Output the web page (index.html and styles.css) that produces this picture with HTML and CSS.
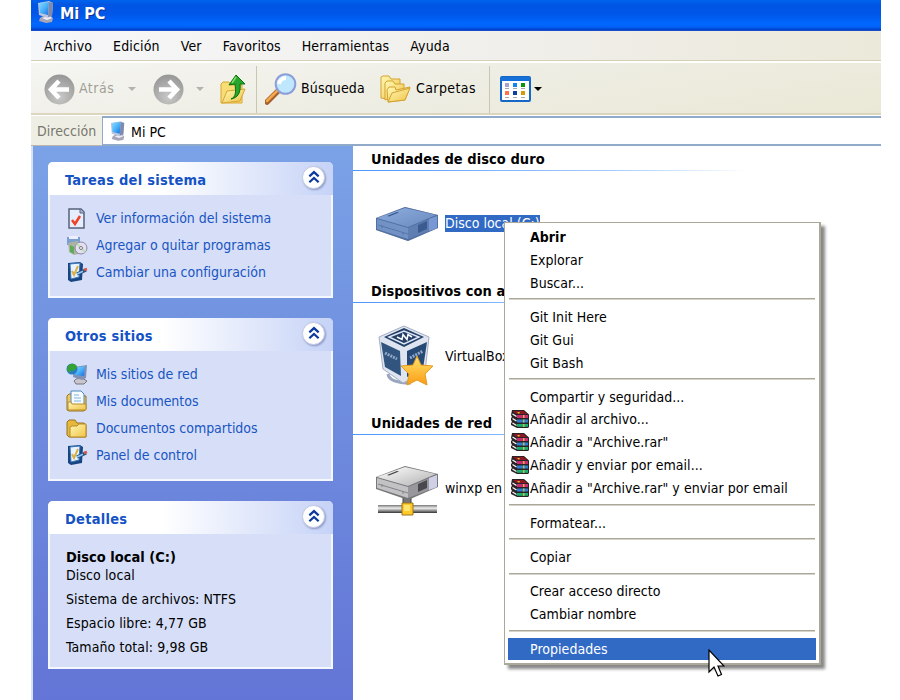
FILE: index.html
```html
<!DOCTYPE html>
<html lang="es">
<head>
<meta charset="utf-8">
<title>Mi PC</title>
<link rel="stylesheet" href="styles.css">
</head>
<body>
<svg class="defs" width="0" height="0">
  <defs>
    <linearGradient id="screen" x1="0" y1="0" x2="1" y2="1"><stop offset="0" stop-color="#8fd9ff"/><stop offset=".5" stop-color="#4bb4fa"/><stop offset="1" stop-color="#1a6fe0"/></linearGradient>
    <linearGradient id="fold" x1="0" y1="0" x2="1" y2="1"><stop offset="0" stop-color="#fff8b5"/><stop offset="1" stop-color="#efc347"/></linearGradient>
    <radialGradient id="grey" cx=".5" cy=".75" r=".7"><stop offset="0" stop-color="#c9c9c7"/><stop offset="1" stop-color="#999"/></radialGradient>
    <linearGradient id="metal" x1="0" y1="0" x2="1" y2="1"><stop offset="0" stop-color="#fff"/><stop offset="1" stop-color="#b0b0b2"/></linearGradient>
    <linearGradient id="pole" x1="0" y1="0" x2="0" y2="1"><stop offset="0" stop-color="#777"/><stop offset=".4" stop-color="#eee"/><stop offset="1" stop-color="#333"/></linearGradient>
    <linearGradient id="gold" x1="0" y1="0" x2="0" y2="1"><stop offset="0" stop-color="#ffe36b"/><stop offset="1" stop-color="#fb9c12"/></linearGradient>
    <symbol id="pc" viewBox="0 0 18 22">
      <path d="M6 15l6-1 4 3-1 4-6 1-7-2 1-3z" fill="#a7a5b8"/><path d="M5 17l7-2 3 2-5 2z" fill="#efeff6"/>
      <path d="M1 2l11-2 4 2-1 13-4 2-9-3z" fill="#bac5df"/><path d="M2 2l10-1-1 13-8-2z" fill="url(#screen)"/><path d="M12 1l4 1-1 13-4 1z" fill="#7f89ae"/>
    </symbol>
    <symbol id="control" viewBox="0 0 22 22">
      <path d="M2 2l12-1 3 2-1 16-11 2-3-2z" fill="#174581"/><path d="M4 3l10-1-1 14-8 2z" fill="#e9f3ff" stroke="#3d76bd"/><path d="M6 10l2 4 4-9" fill="none" stroke="#d9b044" stroke-width="2"/><path d="M11 13l9-4" stroke="#234f83" stroke-width="3.500"/><path d="M11 13l6-2.700" stroke="#92c8f2" stroke-width="1.600"/><path d="M18 9l3-1" stroke="#d75744" stroke-width="2.500"/>
    </symbol>
    <symbol id="up" viewBox="0 0 12 12"><path d="M2 5.500l4-3.700 4 3.700M2 10.500l4-3.700 4 3.700" fill="none" stroke="#0b3a9c" stroke-width="1.900"/></symbol>
    <symbol id="books" viewBox="0 0 18 18">
      <path d="M1 0h12l5 4.500V17l-1 1H6l-6-3v-2l1-1-1-2V8l1-1-1-2z" fill="#2b2226"/>
      <path d="M2 1h10.500l4 3H5.500z" fill="#8c1924"/><path d="M6 5h11v3H6z" fill="#c92a72"/><path d="M6 9.500h11v3H6z" fill="#2a7fd0"/><path d="M6 14h11v2.800H6z" fill="#18b070"/>
      <path d="M1.500 4l4 2.500M1.500 8.500l4 2.500M1.500 13l4 2.500" stroke="#f4f4f4" stroke-width="1.400"/><path d="M6 2h3l-1 2z" fill="#d9b82b"/><path d="M12 5h1.500v3H12zM12 9.500h1.500v3H12zM12 14h1.500v3H12z" fill="#c9b64a"/>
    </symbol>
    <symbol id="drive" viewBox="0 0 64 36">
      <path d="M1 12L30 1l33 8v13L33 35 1 24z" fill="#77777a"/><path d="M2 12L30 2l31 7-28 12z" fill="url(#metal)"/><path d="M2 13l31 9v11L2 23z" fill="#c2c2c5"/><path d="M33 22l29-12v12L33 33z" fill="#97979c"/><path d="M54 13l8-3v12l-8 3z" fill="#cfcfe6"/><path d="M43 19l9-4v8l-9 4z" fill="#48484e"/><path d="M3 19l30 9M7 22v-3M28 29v-3" stroke="#848488"/><path d="M12 10l10-4 2 .6-10 4z" fill="#444"/>
    </symbol>
  </defs>
</svg>

<div class="window">
  <header class="titlebar"><svg width="18" height="22"><use href="#pc"/></svg><span>Mi PC</span></header>
  <nav class="menubar"><span>Archivo</span><span>Edición</span><span>Ver</span><span>Favoritos</span><span>Herramientas</span><span>Ayuda</span></nav>
  <div class="toolbar">
    <svg class="round" width="31" height="31" viewBox="0 0 31 31"><circle cx="15.500" cy="15.500" r="15" fill="url(#grey)"/><path d="M15 7l-8 8.500 8 8.500M8 15.500h17" fill="none" stroke="#fff" stroke-width="4.500"/></svg>
    <span class="label back">Atrás</span><i class="caret dim"></i>
    <svg class="round forward" width="31" height="31" viewBox="0 0 31 31"><circle cx="15.500" cy="15.500" r="15" fill="url(#grey)"/><path d="M16 7l8 8.500-8 8.500M23 15.500H6" fill="none" stroke="#fff" stroke-width="4.500"/></svg>
    <i class="caret dim second"></i>
    <svg class="upfolder" width="26" height="31" viewBox="0 0 26 31"><path d="M1 29V10l2-2h6l2 3h11v18z" fill="#f8dc76" stroke="#d8a631"/><path d="M2 29l5-12 18-2-5 12z" fill="url(#fold)" stroke="#d8a631"/><path d="M11 25c5-2 5-7 4-15l-6 1 7-10 9 9-5 0c1 8-2 14-9 15z" fill="#27a52c" stroke="#08700d"/><path d="M16 3l-4 6" stroke="#89de69" stroke-width="1.500"/></svg>
    <i class="split"></i>
    <svg class="search" width="32" height="32" viewBox="0 0 32 32"><path d="M2 29L14 17" stroke="#a6612b" stroke-width="5.500" stroke-linecap="round"/><path d="M2 28L13 17" stroke="#f5a84f" stroke-width="2.500" stroke-linecap="round"/><circle cx="20.500" cy="11" r="9.800" fill="#bfe8ff" stroke="#8c9fd8" stroke-width="2"/><path d="M14 11a7 7 0 0 1 7-6" stroke="#fff" stroke-width="4" fill="none"/></svg>
    <span class="label find">Búsqueda</span>
    <svg class="folders" width="31" height="28" viewBox="0 0 31 28"><g fill="url(#fold)" stroke="#d3a32e"><path d="M1 23V2l2-1h6l2 3h9v8L8 24z"/><path d="M5 25V8l2-2h6l2 3h9v8z"/><path d="M8 27L7 15l2-3h6l1 3 14-3-5 13z"/><path d="M8 27l4-9 18-5-5 12z"/></g></svg>
    <span class="label">Carpetas</span>
    <i class="split last"></i>
    <svg class="views" width="31" height="26" viewBox="0 0 31 26"><rect x="1" y="1" width="29" height="24" rx="1" fill="#fff" stroke="#1767c7" stroke-width="2"/><path d="M1 1h29v4H1z" fill="#1672d9"/><path d="M5 7h4v4H5z" fill="#a9a2d2"/><path d="M13 7h4v4h-4z" fill="#1585ed"/><path d="M21 7h4v4h-4z" fill="#0b960d"/><path d="M5 15h4v4H5z" fill="#ff7448"/><path d="M13 15h4v4h-4z" fill="#103e9c"/><path d="M21 15h4v4h-4z" fill="#d39b09"/><path d="M5 12.500h4m4 0h4m4 0h4M5 21.500h4m4 0h4m4 0h4" stroke="#aaa"/></svg>
    <i class="caret"></i>
  </div>
  <div class="address"><span class="address-label">Dirección</span><div class="address-field"><svg width="16" height="20"><use href="#pc"/></svg><span>Mi PC</span></div></div>
  <div class="body">
    <aside class="side">
      <section class="panel tasks">
        <h2>Tareas del sistema<b class="collapse"><svg width="14" height="14"><use href="#up"/></svg></b></h2>
        <ul>
          <li><svg width="22" height="22" viewBox="0 0 22 22"><path d="M3 2h12l3 3v16H3z" fill="#e6eefd" stroke="#56627e" stroke-width="1.500"/><path d="M14 2v4h4" fill="#aebbd8" stroke="#56627e"/><path d="M6 13l3 4 5-8" fill="none" stroke="#f14024" stroke-width="2.500"/></svg>Ver información del sistema</li>
          <li><svg width="22" height="22" viewBox="0 0 22 22"><path d="M1 3h13v8H1z" fill="#79a0d0"/><path d="M3 2h9v3H3z" fill="#eef"/><path d="M2 9l9-2 6 3v9l-9 2-5-3z" fill="#aeb2a3"/><path d="M4 11l4 2v7l-4-2z" fill="#5eac55"/><circle cx="15" cy="14" r="6" fill="#e4def4" stroke="#8b88a5"/><path d="M15 14l-4-4M15 14l4 4" stroke="#b8e1b2" stroke-width="2"/><circle cx="15" cy="14" r="1.500" fill="#fff" stroke="#777"/></svg>Agregar o quitar programas</li>
          <li><svg width="22" height="22"><use href="#control"/></svg>Cambiar una configuración</li>
        </ul>
      </section>
      <section class="panel places">
        <h2>Otros sitios<b class="collapse"><svg width="14" height="14"><use href="#up"/></svg></b></h2>
        <ul>
          <li><svg width="22" height="22" viewBox="0 0 22 22"><path d="M10 16l6-1 5 3-3 3h-8l-2-3z" fill="#c9c6cf" stroke="#777"/><path d="M8 4l13-2-1 13-4 2-9-3z" fill="#8091b5"/><path d="M8 5l11-2-1 10-9-1z" fill="url(#screen)"/><circle cx="6" cy="6" r="5.500" fill="#277cc5"/><path d="M2 3c4-4 8-2 9 1L8 8 5 7 4 10 1 7z" fill="#35a333"/></svg>Mis sitios de red</li>
          <li><svg width="22" height="22" viewBox="0 0 22 22"><path d="M1 20V6l2-2h3l2 2h12v13l-2 2H3z" fill="#f2ca5c" stroke="#94722c"/><path d="M5 1h10l3 3v11H5z" fill="#f5fbff" stroke="#4d89bd"/><path d="M8 5h5M8 8h7M8 11h7" stroke="#7fb3dd"/><path d="M2 12h3l1 2h14v6H2z" fill="url(#fold)" stroke="#b78b31"/></svg>Mis documentos</li>
          <li><svg width="22" height="22" viewBox="0 0 22 22"><path d="M1 18V5l2-2h6l2 3h7l2 2v12H3z" fill="#e6b83c" stroke="#987125"/><path d="M4 20V10l2-1h5l2-2h7v13z" fill="url(#fold)" stroke="#b98b2a"/></svg>Documentos compartidos</li>
          <li><svg width="22" height="22"><use href="#control"/></svg>Panel de control</li>
        </ul>
      </section>
      <section class="panel details">
        <h2>Detalles<b class="collapse"><svg width="14" height="14"><use href="#up"/></svg></b></h2>
        <div class="info"><strong>Disco local (C:)</strong><p>Disco local</p><p>Sistema de archivos: NTFS</p><p>Espacio libre: 4,77 GB</p><p>Tamaño total: 9,98 GB</p></div>
      </section>
    </aside>
    <main class="content">
      <section class="group"><h3>Unidades de disco duro</h3><div class="entry">
        <svg width="64" height="36" viewBox="0 0 64 36"><use href="#drive" width="64" height="36"/><path d="M1 12L30 1l33 8v13L33 35 1 24z" fill="#316ac5" opacity=".55"/></svg><span class="selected">Disco local (C:)</span></div></section>
      <section class="group"><h3>Dispositivos con a</h3><div class="entry">
        <svg width="64" height="62" viewBox="0 0 64 62"><path d="M13 49c1 8 13 9 23 9" fill="none" stroke="#9aa6bf" stroke-width="3"/><path d="M4 12L29 1l25 11-4 35-22 11L8 44z" fill="#dfe5f0" stroke="#a4aec4"/><path d="M9 12l20-9 20 9-20 10z" fill="#243f68"/><path d="M14 12l15-6 15 6-15 7z" fill="none" stroke="#dce6f5" stroke-width="1.500"/><path d="M22 12l5 2.500 1-5 4 5 1-5 4 2.500" fill="none" stroke="#fff" stroke-width="1.500"/><path d="M6 17l19 9 1 25-16-9z" fill="#31557f"/><path d="M32 26l20-9-4 27-16 8z" fill="#274976"/><path d="M10 28l12 6M35 33l13-7" stroke="#8fa6c6" stroke-width="3" stroke-dasharray="2 1"/><path d="M42 31l4 9 12 1-8 8 2 11-10-5-10 5 2-11-8-8 12-1z" fill="url(#gold)" stroke="#e39a22"/></svg><span>VirtualBox</span></div></section>
      <section class="group"><h3>Unidades de red</h3><div class="entry">
        <svg class="netdrive" width="64" height="52" viewBox="0 0 64 52"><path d="M28 30h8v15h-8z" fill="#77777a" stroke="#444"/><use href="#drive" width="64" height="36"/><path d="M3 40h59v8H3z" fill="url(#pole)"/><path d="M27 38h11v12H27z" fill="#ffc928" stroke="#9b7417"/><path d="M29 40h6v6h-6z" fill="#ffe56d"/></svg><span>winxp en</span></div></section>
    </main>
  </div>
</div>

<div class="menu">
  <div class="item default">Abrir</div><div class="item">Explorar</div><div class="item">Buscar...</div><hr>
  <div class="item">Git Init Here</div><div class="item">Git Gui</div><div class="item">Git Bash</div><hr>
  <div class="item">Compartir y seguridad...</div>
  <div class="item rar"><svg width="18" height="18"><use href="#books"/></svg>Añadir al archivo...</div>
  <div class="item rar"><svg width="18" height="18"><use href="#books"/></svg>Añadir a "Archive.rar"</div>
  <div class="item rar"><svg width="18" height="18"><use href="#books"/></svg>Añadir y enviar por email...</div>
  <div class="item rar"><svg width="18" height="18"><use href="#books"/></svg>Añadir a "Archive.rar" y enviar por email</div><hr>
  <div class="item">Formatear...</div><hr><div class="item">Copiar</div><hr>
  <div class="item">Crear acceso directo</div><div class="item">Cambiar nombre</div><hr>
  <div class="item active">Propiedades</div>
</div>
<svg class="cursor" width="17" height="29" viewBox="0 0 17 29"><path d="M1 1v22l5-5 4 9 3.500-1.500L10 17h6z" fill="#fff" stroke="#000" stroke-width="1.200"/></svg>
</body>
</html>
```
FILE: styles.css
```css
* { box-sizing: border-box; }
body {
  margin: 0; width: 900px; height: 700px; overflow: hidden; background: #fff; color: #000;
  font: 14px/18px "DejaVu Sans Condensed", "DejaVu Sans", sans-serif; font-stretch: condensed;
  letter-spacing: 0.04px; white-space: nowrap; position: relative;
}
svg { flex: none; display: block; }
.defs { position: absolute; }
h2, h3, p, ul { margin: 0; padding: 0; }
.window { width: 850px; height: 700px; margin-left: 31px; display: flex; flex-direction: column; }
.titlebar {
  height: 31px; flex: none; display: flex; align-items: center; gap: 5px; padding: 0 0 5px 6px;
  color: #fff; font-size: 16px; font-weight: bold; letter-spacing: 0; text-shadow: 1px 1px #0a3391;
  background: linear-gradient(#0064ee 0, #0055e2 5px, #0056e9 14px, #0068ff 24px, #0061f6 27px, #003dc4 30px, #305fd2 31px);
}
.titlebar svg { margin-top: -3px; }
.titlebar span { padding-top: 2px; }
.menubar { height: 32px; flex: none; padding: 6px 0 0 13px; display: flex; gap: 21px; letter-spacing: 0.15px; background: linear-gradient(90deg, #f6f7f9, #f0efeb 55%, #ebe9d9); border-bottom: 2px solid #fff; box-shadow: inset 0 -1px #d6cfb8; }
.toolbar { height: 53px; flex: none; display: flex; align-items: center; padding-left: 13px; background: linear-gradient(170deg, #f5f5f2, #eeede3 50%, #eae8d5); border-bottom: 1px solid #fff; box-shadow: inset 0 -2px #ddd6be; }
.label { letter-spacing: 0.15px; margin-top: -2px; }
.back { width: 43px; margin-left: 4px; color: #a09f96; letter-spacing: 0.5px; }
.caret { width: 8px; height: 4px; background: #000; clip-path: polygon(0 0, 100% 0, 50% 100%); margin-left: 3px; }
.caret.dim { background: #b5b3aa; margin-left: 6px; }
.forward { margin-left: 17px; }
.caret.second { margin-left: 12px; }
.upfolder { margin-left: 16px; }
.split { width: 1px; height: 47px; background: #cbc6b1; margin-left: 10px; }
.search { margin-left: 8px; }
.find { width: 68px; margin-left: 4px; }
.folders { margin: 0 5px 0 11px; }
.folders + .label { width: 63px; letter-spacing: 0.4px; }
.split.last { margin-left: 10px; }
.views { margin-left: 10px; }
.address { height: 30px; flex: none; display: flex; background: #efeee4; }
.address-label { width: 71px; padding: 6px 0 0 6px; color: #77776f; border-bottom: 1px solid #bab8ae; }
.address-field { flex: 1; display: flex; gap: 5px; align-items: center; padding-left: 7px; background: #fff; border: solid #8fabc9; border-width: 2px 0 2px 1px; }
.address-field span { padding-top: 2px; }
.body { flex: 1; display: flex; min-height: 0; }
.side { width: 322px; flex: none; padding: 16px 20px 0 15px; border-left: 2px solid #d8e2f6; background: linear-gradient(#7ba2e7, #7192e0 35%, #6375d6); }
.panel { border: solid #f5f7ff; border-width: 0 2px 2px; border-radius: 5px 5px 0 0; background: #d6dff7; margin-bottom: 20px; }
.tasks { height: 136px; }
.places { height: 163px; }
.details { height: 168px; }
.panel h2 { height: 33px; display: flex; align-items: center; justify-content: space-between; margin: 0 -2px; padding: 3px 8px 0 17px; border-radius: 5px 5px 0 0; background: linear-gradient(90deg, #fff 40%, #c6d3f7); color: #1452c5; font-size: 14.5px; letter-spacing: 0.25px; }
.collapse { width: 23px; height: 23px; margin-top: -6px; border-radius: 50%; background: #fff; border: 1px solid #c3cae2; box-shadow: 1px 1px 2px #8e9bc6; display: grid; place-items: center; }
.panel ul { list-style: none; padding: 10px 0 0 16px; color: #1955c3; letter-spacing: -0.02px; }
.panel li { height: 26.8px; display: flex; align-items: center; gap: 8px; }
.info { padding: 14px 0 0 16px; }
.info strong { display: block; font-size: 14.5px; letter-spacing: 0; }
.info p { height: 24px; letter-spacing: 0.1px; }
.content { flex: 1; }
.group { height: 132px; }
.group h3 { height: 25px; padding: 4px 0 0 18px; font-size: 14.5px; line-height: 18px; letter-spacing: 0.05px; background: linear-gradient(90deg, #4c96ff, #a8cdff 50%, #fff 75%) bottom / 100% 1px no-repeat; }
.entry { height: 105px; display: flex; align-items: center; gap: 6px; padding-left: 22px; letter-spacing: 0; }
.netdrive { margin-top: 6px; }
.selected { background: #316ac5; color: #fff; line-height: 17px; }
.menu { position: absolute; left: 504px; top: 222px; width: 317px; height: 443px; padding: 2px; background: #fff; border: 2px solid #aca899; border-top-width: 1px; border-left-width: 1px; box-shadow: 4px 4px 3px #888; }
.menu .item { height: 22.8px; line-height: 24px; padding-left: 22px; margin: 0 1px; }
.menu .default { font-weight: bold; }
.menu .rar { display: flex; align-items: center; padding-left: 3px; gap: 1px; }
.menu hr { border: 0; height: 11.6px; margin: 0 2px; background: linear-gradient(#aca899, #aca899) 0 5px / 100% 1.5px no-repeat; }
.menu .active { background: #316ac5; color: #fff; margin-top: 1px; line-height: 22px; }
.cursor { position: absolute; left: 708px; top: 649px; }
```
